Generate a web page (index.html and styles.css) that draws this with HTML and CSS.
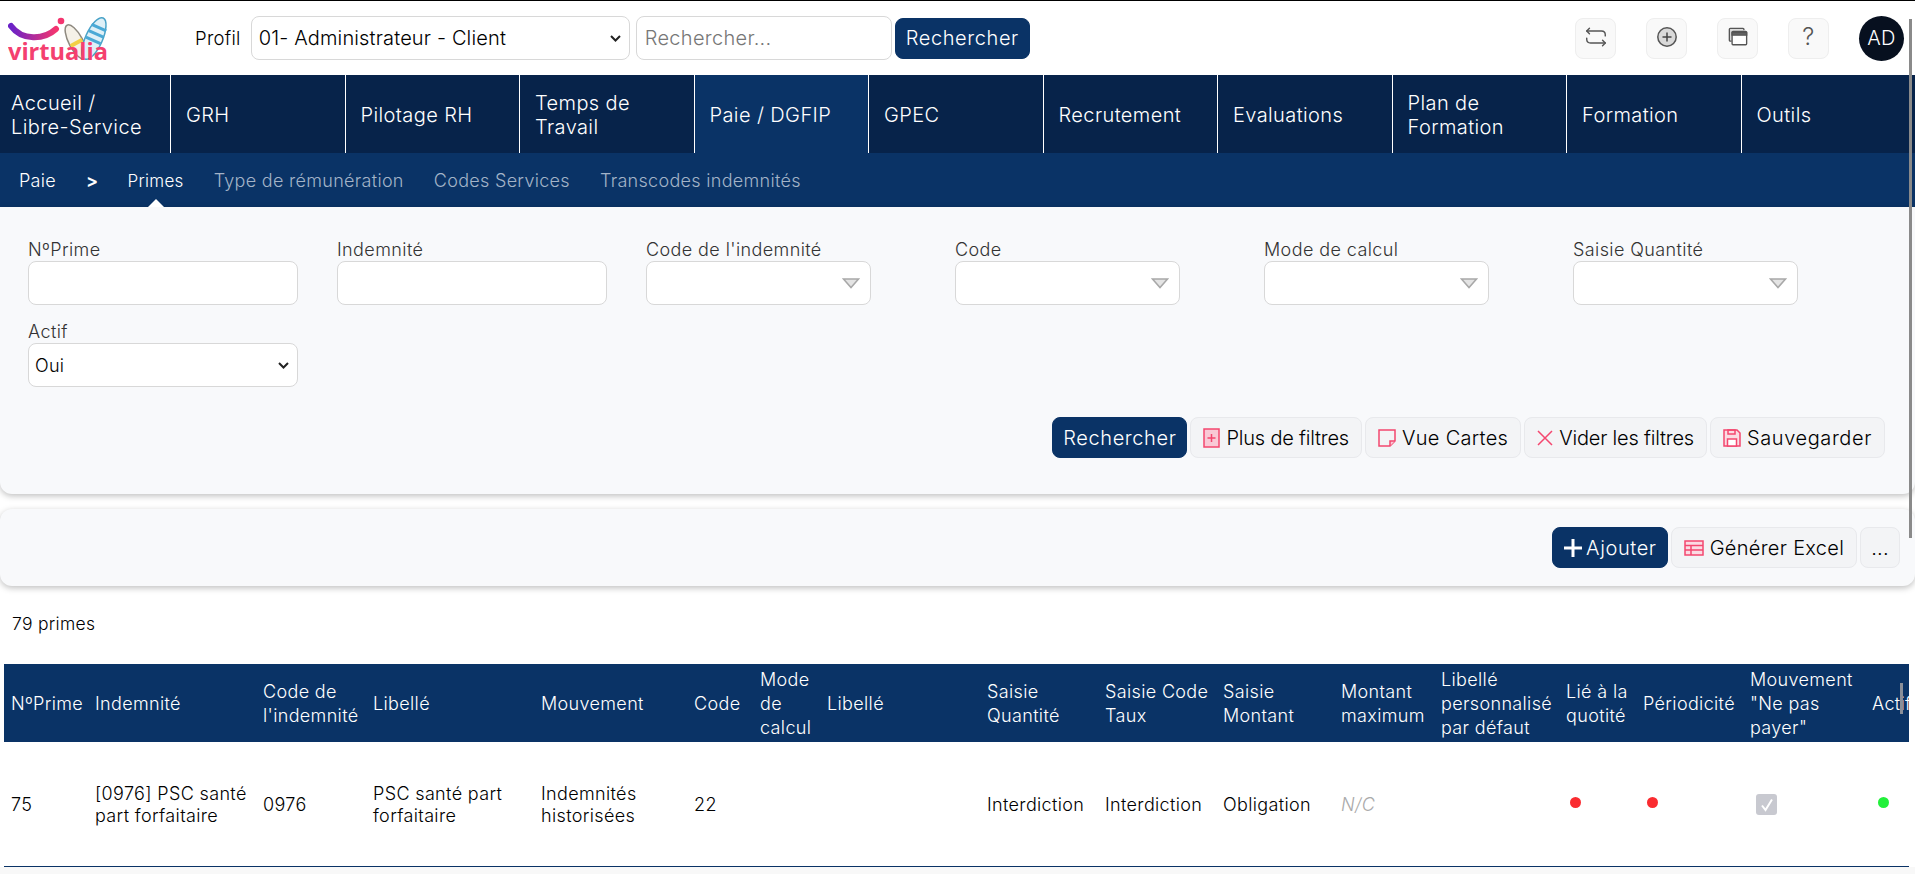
FILE: index.html
```html
<!DOCTYPE html>
<html lang="fr">
<head>
  <meta charset="UTF-8">
  <title>Primes</title>
  <link rel="stylesheet" href="styles.css">
</head>
<body>

  <header class="topbar">
    <svg class="logo" width="112" height="62" viewBox="0 0 112 62">
      <defs>
        <linearGradient id="smile" x1="0" x2="1" y1="0" y2="0">
          <stop offset="0" stop-color="#6a22c8"/>
          <stop offset="1" stop-color="#f4356f"/>
        </linearGradient>
      </defs>
      <path d="M3 17 C14 32 36 31 48 20" fill="none" stroke="url(#smile)" stroke-width="6" stroke-linecap="round"/>
      <circle cx="53" cy="12" r="3.300" fill="#f4356f"/>
      <g transform="rotate(-28 68 33)">
        <ellipse cx="68" cy="33" rx="7" ry="19" fill="#f5f1e8" stroke="#8f8a80" stroke-width="1.500"/>
        <rect x="61.500" y="32" width="13" height="4" fill="#f3cf45"/>
      </g>
      <g transform="rotate(24 86 29.500)">
        <ellipse cx="86" cy="29.500" rx="8.500" ry="22.500" fill="#dff0f7" stroke="#4aa3c8" stroke-width="1.500"/>
        <rect x="78" y="16" width="16" height="3" fill="#4aa9d6"/>
        <rect x="78" y="23" width="16" height="3" fill="#4aa9d6"/>
        <rect x="78" y="30" width="16" height="3" fill="#4aa9d6"/>
      </g>
      <text class="logo-text" x="0" y="51" textLength="100" lengthAdjust="spacingAndGlyphs">virtualia</text>
    </svg>
    <span class="profil-label">Profil</span>
    <select class="profil-select"><option>01- Administrateur - Client</option></select>
    <input class="search-input" type="text" placeholder="Rechercher...">
    <button class="btn btn-primary search-btn">Rechercher</button>

    <div class="top-icons">
      <button class="icon-btn">
        <svg width="26" height="24" viewBox="0 0 22 22" fill="none" stroke="#555" stroke-width="1.300" stroke-linecap="round" stroke-linejoin="round">
          <path d="M5 3 L2.500 5.500 L5 8"/><path d="M2.500 5.500 H16 Q19.500 5.500 19.500 9 V10"/>
          <path d="M17 19 L19.500 16.500 L17 14"/><path d="M19.500 16.500 H6 Q2.500 16.500 2.500 13 V12"/>
        </svg>
      </button>
      <button class="icon-btn">
        <svg width="22" height="22" viewBox="0 0 22 22">
          <circle cx="11" cy="11" r="9.200" fill="#d9d9d9" stroke="#555" stroke-width="1.500"/>
          <path d="M11 6.500 V15.500 M6.500 11 H15.500" stroke="#444" stroke-width="1.500"/>
        </svg>
      </button>
      <button class="icon-btn">
        <svg width="22" height="20" viewBox="0 0 22 22" fill="none" stroke="#555" stroke-width="1.500">
          <path d="M17.500 3.500 V2.500 Q17.500 1.500 16.500 1.500 H2.500 Q1.500 1.500 1.500 2.500 V14.500 Q1.500 15.500 2.500 15.500 H4" fill="#ddd"/>
          <rect x="4.500" y="5" width="16" height="14.500" rx="1" fill="#fff"/>
          <path d="M4.500 6 H20.500 V9 H4.500 Z" fill="#666"/>
        </svg>
      </button>
      <button class="icon-btn help">?</button>
      <div class="avatar">AD</div>
    </div>
  </header>

  <nav class="main-nav">
    <a class="nav-item">Accueil /<br>Libre-Service</a>
    <a class="nav-item">GRH</a>
    <a class="nav-item">Pilotage RH</a>
    <a class="nav-item">Temps de<br>Travail</a>
    <a class="nav-item active">Paie / DGFIP</a>
    <a class="nav-item">GPEC</a>
    <a class="nav-item">Recrutement</a>
    <a class="nav-item">Evaluations</a>
    <a class="nav-item">Plan de<br>Formation</a>
    <a class="nav-item">Formation</a>
    <a class="nav-item">Outils</a>
  </nav>

  <div class="sub-nav">
    <a class="sub-link current">Paie</a>
    <span class="sub-sep">&gt;</span>
    <a class="sub-link current selected">Primes</a>
    <a class="sub-link">Type de rémunération</a>
    <a class="sub-link">Codes Services</a>
    <a class="sub-link">Transcodes indemnités</a>
  </div>

  <section class="filters">
    <div class="filter-grid">
      <div class="field">
        <label>NºPrime</label>
        <input class="control wide" type="text">
      </div>
      <div class="field">
        <label>Indemnité</label>
        <input class="control wide" type="text">
      </div>
      <div class="field">
        <label>Code de l'indemnité</label>
        <div class="control combo"><svg width="18" height="11" viewBox="0 0 18 11"><path d="M1.500 1 H16.500 L9 9.500 Z" fill="#e4e4e4" stroke="#a8a8a8" stroke-width="1.500"/></svg></div>
      </div>
      <div class="field">
        <label>Code</label>
        <div class="control combo"><svg width="18" height="11" viewBox="0 0 18 11"><path d="M1.500 1 H16.500 L9 9.500 Z" fill="#e4e4e4" stroke="#a8a8a8" stroke-width="1.500"/></svg></div>
      </div>
      <div class="field">
        <label>Mode de calcul</label>
        <div class="control combo"><svg width="18" height="11" viewBox="0 0 18 11"><path d="M1.500 1 H16.500 L9 9.500 Z" fill="#e4e4e4" stroke="#a8a8a8" stroke-width="1.500"/></svg></div>
      </div>
      <div class="field">
        <label>Saisie Quantité</label>
        <div class="control combo"><svg width="18" height="11" viewBox="0 0 18 11"><path d="M1.500 1 H16.500 L9 9.500 Z" fill="#e4e4e4" stroke="#a8a8a8" stroke-width="1.500"/></svg></div>
      </div>
      <div class="field">
        <label>Actif</label>
        <select class="control wide native-select"><option>Oui</option></select>
      </div>
    </div>
    <div class="filter-actions">
      <button class="btn btn-primary">Rechercher</button>
      <button class="btn tight">
        <svg width="17" height="20" viewBox="0 0 17 20"><rect x="1" y="1" width="15" height="18" fill="#f9c9d6" stroke="#f4476f" stroke-width="1.500"/><path d="M8.500 6 V14 M4.500 10 H12.500" stroke="#f4476f" stroke-width="1.500"/></svg>
        Plus de filtres
      </button>
      <button class="btn">
        <svg width="18" height="18" viewBox="0 0 18 18" fill="none" stroke="#f4476f" stroke-width="1.500"><path d="M1 1 H17 V12 L12 17 H1 Z"/><path d="M17 12 H12 V17" fill="#f9c9d6"/></svg>
        Vue Cartes
      </button>
      <button class="btn tight">
        <svg width="16" height="16" viewBox="0 0 16 16" stroke="#f4476f" stroke-width="1.500"><path d="M1 1 L15 15 M15 1 L1 15"/></svg>
        Vider les filtres
      </button>
      <button class="btn loose">
        <svg width="18" height="18" viewBox="0 0 18 18" fill="none" stroke="#f4476f" stroke-width="1.500"><path d="M1 1 H14 L17 4 V17 H1 Z" fill="#fbdbe3"/><rect x="5" y="1" width="7" height="4"/><rect x="4.500" y="10" width="9" height="7" fill="#fff"/></svg>
        Sauvegarder
      </button>
    </div>
  </section>

  <section class="toolbar">
    <button class="btn btn-primary">
      <svg width="20" height="20" viewBox="0 0 20 20" stroke="#fff" stroke-width="3"><path d="M10 1 V19 M1 10 H19"/></svg>
      Ajouter
    </button>
    <button class="btn">
      <svg width="20" height="16" viewBox="0 0 20 16" fill="none" stroke="#f4476f" stroke-width="1.500"><rect x="1" y="1" width="18" height="14" fill="#fbdbe3"/><path d="M1 5.500 H19 M1 10 H19 M7 5.500 V15"/></svg>
      Générer Excel
    </button>
    <button class="btn btn-more">...</button>
  </section>

  <p class="count">79 primes</p>

  <div class="table-wrap">
    <table class="primes">
      <colgroup>
        <col class="w84"><col class="w168"><col class="w110"><col class="w168"><col class="w153">
        <col class="w66"><col class="w67"><col class="w160"><col class="w118"><col class="w118">
        <col class="w118"><col class="w100"><col class="w125"><col class="w77"><col class="w107">
        <col class="w122"><col class="w80">
      </colgroup>
      <thead>
        <tr>
          <th>NºPrime</th><th>Indemnité</th><th>Code de l'indemnité</th><th>Libellé</th><th>Mouvement</th>
          <th>Code</th><th>Mode de calcul</th><th>Libellé</th><th>Saisie Quantité</th><th>Saisie Code Taux</th>
          <th>Saisie Montant</th><th>Montant maximum</th><th>Libellé personnalisé par défaut</th><th>Lié à la quotité</th><th>Périodicité</th>
          <th>Mouvement "Ne pas payer"</th><th>Actif</th>
        </tr>
      </thead>
      <tbody>
        <tr>
          <td>75</td><td>[0976] PSC santé part forfaitaire</td><td>0976</td><td>PSC santé part forfaitaire</td><td>Indemnités historisées</td>
          <td>22</td><td></td><td></td><td>Interdiction</td><td>Interdiction</td>
          <td>Obligation</td><td class="na">N/C</td><td></td>
          <td><span class="dot red"></span></td><td><span class="dot red"></span></td>
          <td><span class="check">
            <svg width="14" height="14" viewBox="0 0 14 14" fill="none" stroke="#fff" stroke-width="2"><path d="M2 7.500 L5.500 12 L12 1.500"/></svg>
          </span></td>
          <td><span class="dot green"></span></td>
        </tr>
      </tbody>
    </table>
    <div class="table-scroll"></div>
  </div>
  <div class="page-rest"></div>

  <div class="page-scroll"></div>

</body>
</html>
```

FILE: styles.css
```css
* {
  box-sizing: border-box;
}

html, body {
  height: 100%;
}

body {
  margin: 0;
  display: flex;
  flex-direction: column;
  position: relative;
  overflow: hidden;
  background: white;
  color: black;
  font-family: Inter, "Open Sans", sans-serif;
  font-size: 18px;
  font-weight: 300;
  letter-spacing: 0.3px;
}

button, input, select {
  font-family: inherit;
  font-weight: inherit;
  letter-spacing: inherit;
}

/* top bar */
.topbar {
  height: 75px;
  flex-shrink: 0;
  border-top: 1px solid black;
  display: flex;
  align-items: center;
  padding: 0 11px 0 8px;
}

.logo {
  flex-shrink: 0;
  margin-top: 3px;
}

.logo-text {
  font-family: "Open Sans", sans-serif;
  font-size: 24px;
  font-weight: 700;
  letter-spacing: 0;
  fill: #f4406f;
}

.profil-label {
  margin-left: 75px;
  margin-right: 10px;
  font-size: 18.5px;
}

.native-select, .profil-select {
  appearance: none;
  background: white url("data:image/svg+xml,%3Csvg xmlns='http://www.w3.org/2000/svg' width='11' height='7' viewBox='0 0 11 7'%3E%3Cpath d='M1 1 L5.500 5.500 L10 1' fill='none' stroke='%23222' stroke-width='2'/%3E%3C/svg%3E") no-repeat right 8px center;
}

.profil-select {
  width: 379px;
  height: 44px;
  padding-left: 7px;
  border: 1px solid #d8d8d8;
  border-radius: 8px;
  font-size: 20px;
  letter-spacing: 0.15px;
}

.search-input {
  width: 256px;
  height: 44px;
  margin-left: 6px;
  padding-left: 8px;
  border: 1px solid #d8d8d8;
  border-radius: 8px;
  font-size: 20px;
}

.search-input::placeholder {
  color: #777;
}

.search-btn {
  margin-left: 3px;
}

.top-icons {
  margin-left: auto;
  display: flex;
  align-items: center;
  gap: 30px;
}

.icon-btn {
  width: 41px;
  height: 41px;
  padding: 0 0 3px;
  display: flex;
  align-items: center;
  justify-content: center;
  background: #f9f9f9;
  border: 1px solid #eeeeee;
  border-radius: 8px;
}

.help {
  color: #555;
  font-size: 24px;
}

.avatar {
  width: 45px;
  height: 45px;
  border-radius: 50%;
  background: #07101f;
  color: white;
  display: flex;
  align-items: center;
  justify-content: center;
  font-size: 20px;
}

/* nav */
.main-nav {
  height: 78px;
  flex-shrink: 0;
  display: flex;
  background: #07234a;
  color: white;
}

.nav-item {
  width: 174.5px;
  flex-shrink: 0;
  display: flex;
  align-items: center;
  padding: 2px 0 0 15px;
  border-right: 1px solid white;
  font-size: 20px;
  letter-spacing: 0.4px;
  line-height: 24px;
}

.nav-item:first-child {
  width: 171px;
  padding-left: 11px;
}

.nav-item:last-child {
  border-right: none;
}

.nav-item.active {
  background: #0a3366;
}

.sub-nav {
  height: 54px;
  flex-shrink: 0;
  display: flex;
  align-items: center;
  padding: 1px 0 0 19px;
  background: #0a3366;
  color: #a3b3c8;
}

.sub-link {
  margin-right: 30px;
  white-space: nowrap;
}

.sub-link.current {
  color: white;
}

.sub-sep {
  margin-right: 29px;
  color: white;
  font-weight: 600;
}

.sub-link.selected {
  position: relative;
  height: 53px;
  line-height: 55px;
  font-size: 17px;
}

.sub-link.selected::after {
  content: "";
  position: absolute;
  left: 50%;
  bottom: 0;
  margin-left: -8px;
  border: 8px solid transparent;
  border-top: none;
  border-bottom-color: white;
}

/* filters */
.filters {
  height: 287px;
  flex-shrink: 0;
  padding: 32px 30px 0 28px;
  background: #f8f9fb;
  border-radius: 0 0 12px 12px;
  box-shadow: 0 2px 6px rgba(0, 0, 0, 0.25);
}

.filter-grid {
  display: grid;
  grid-template-columns: repeat(6, 309px);
  row-gap: 16px;
}

.field label {
  display: block;
  height: 22px;
  line-height: 22px;
  color: #333;
  white-space: nowrap;
  letter-spacing: 0.4px;
}

.control {
  display: block;
  height: 44px;
  background-color: white;
  border: 1px solid #d8d8d8;
  border-radius: 8px;
  font-size: 18px;
  padding-left: 6px;
}

.wide {
  width: 270px;
}

.combo {
  width: 225px;
  display: flex;
  align-items: center;
  justify-content: flex-end;
  padding-right: 10px;
}

.filter-actions {
  display: flex;
  justify-content: flex-end;
  gap: 3px;
  margin-top: 30px;
}

.btn {
  height: 41px;
  padding: 0 12px;
  display: inline-flex;
  align-items: center;
  gap: 6px;
  background: #f3f4f6;
  border: 1px solid #e8e9ec;
  border-radius: 8px;
  color: black;
  font-size: 20px;
  white-space: nowrap;
}

.btn-primary {
  padding: 0 10px;
  background: #0a3366;
  border-color: #0a3366;
  color: white;
  letter-spacing: 0.6px;
  gap: 3px;
}

.tight {
  letter-spacing: -0.2px;
}

.loose {
  letter-spacing: 0.6px;
}

.btn-more {
  padding: 0 10px;
}

/* toolbar */
.toolbar {
  height: 77px;
  flex-shrink: 0;
  margin-top: 15px;
  padding: 18px 15px 0 0;
  display: flex;
  justify-content: flex-end;
  gap: 3px;
  background: #f8f9fb;
  border-radius: 12px;
  box-shadow: 0 2px 6px rgba(0, 0, 0, 0.25);
}

.count {
  height: 78px;
  flex-shrink: 0;
  margin: 0;
  padding: 27px 0 0 12px;
  font-size: 17.5px;
  line-height: 22px;
}

/* table */
.table-wrap {
  position: relative;
  flex-shrink: 0;
  width: 1905px;
  margin-left: 4px;
  overflow: hidden;
}

.primes {
  table-layout: fixed;
  width: 1941px;
  border-collapse: collapse;
}

.w84 { width: 84px; }
.w168 { width: 168px; }
.w110 { width: 110px; }
.w153 { width: 153px; }
.w66 { width: 66px; }
.w67 { width: 67px; }
.w160 { width: 160px; }
.w118 { width: 118px; }
.w100 { width: 100px; }
.w125 { width: 125px; }
.w77 { width: 77px; }
.w107 { width: 107px; }
.w122 { width: 122px; }
.w80 { width: 80px; }

.primes th {
  height: 78px;
  padding: 1px 0 0 7px;
  background: #0a3366;
  color: white;
  font-size: 18px;
  font-weight: 300;
  letter-spacing: 0.35px;
  line-height: 24px;
  text-align: left;
}

.primes td {
  height: 124px;
  padding: 2px 2px 0 7px;
  border-bottom: 1px solid #0a3366;
  font-size: 18px;
  letter-spacing: 0.35px;
  line-height: 22px;
}

.na {
  color: #aaa;
  font-style: italic;
}

.dot {
  display: block;
  width: 11px;
  height: 11px;
  margin: -5px 0 0 4px;
  border-radius: 50%;
}

.red {
  background: #fa2b30;
}

.green {
  background: #22f03a;
  margin-left: 6px;
}

.check {
  display: flex;
  align-items: center;
  justify-content: center;
  width: 21px;
  height: 21px;
  margin-left: 6px;
  background: #c8c9d0;
  border-radius: 3px;
}

.table-scroll {
  position: absolute;
  top: 19px;
  right: 6px;
  width: 3px;
  height: 31px;
  background: #8a8f99;
}

.page-rest {
  flex-grow: 1;
  background: #f8f8f8;
}

.page-scroll {
  position: absolute;
  top: 19px;
  right: 3px;
  width: 3px;
  height: 519px;
  background: #8a8a8a;
}
```
